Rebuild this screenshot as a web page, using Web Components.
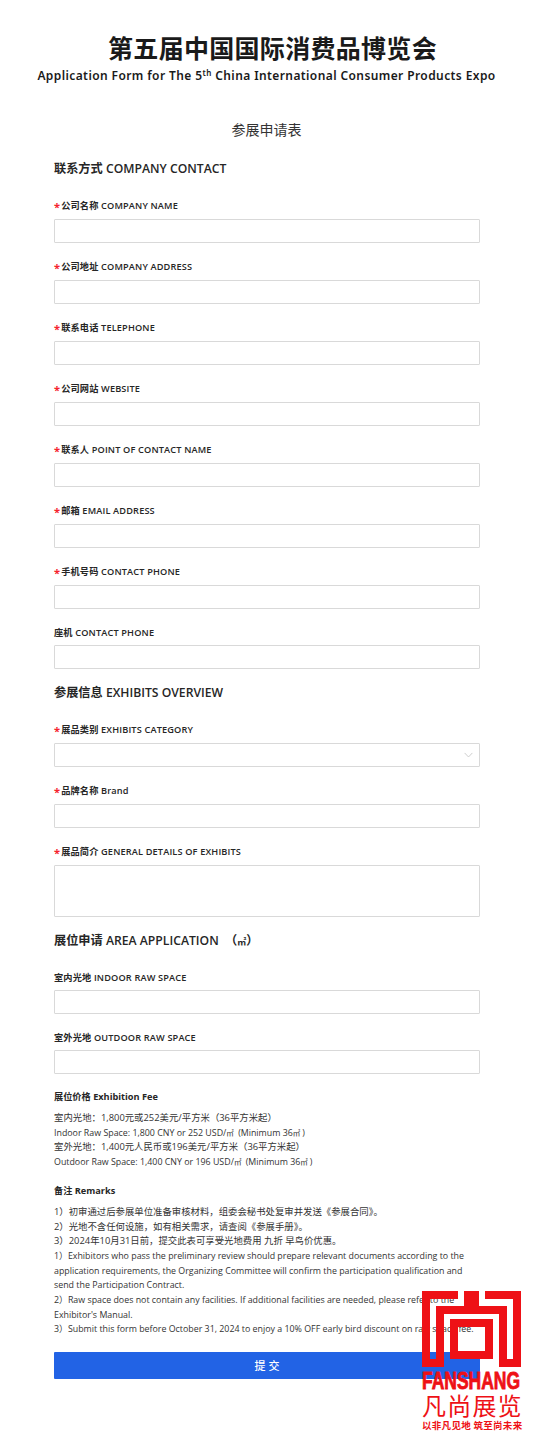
<!DOCTYPE html>
<html lang="zh">
<head>
<meta charset="utf-8">
<title>参展申请表</title>
<style>
  html, body { margin: 0; padding: 0; background: #fff; }
  body {
    font-family: "Open Sans", "Noto Sans CJK SC", sans-serif;
    color: #262626;
    position: relative;
    height: 1445px;
    overflow: hidden;
  }
</style>
</head>
<body>
<expo-form></expo-form>
<fanshang-logo></fanshang-logo>

<script>
class ExpoHeader extends HTMLElement {
    constructor() {
        super();
        this.attachShadow({ mode: 'open' }).innerHTML = `
            <style>
                :host { display: block; text-align: center; color: #1a1a1a; padding-top: 31px; }
                h1 {
                    margin: 0;
                    padding-left: 12px;
                    font: 700 25px/32px "Noto Sans CJK SC", sans-serif;
                    letter-spacing: 0.3px;
                }
                p {
                    margin: 4px 0 0;
                    font: 600 12px/18px "Noto Sans", "Noto Sans CJK SC", sans-serif;
                    letter-spacing: 0.4px;
                    white-space: nowrap;
                }
                sup { font-size: 8px; line-height: 0; vertical-align: 4px; }
                h2 {
                    margin: 34px 0 0;
                    font: 400 14px/20px "Noto Sans CJK SC", sans-serif;
                    color: #333;
                }
            </style>
            <h1>第五届中国国际消费品博览会</h1>
            <p>Application Form for The 5<sup>th</sup> China International Consumer Products Expo</p>
            <h2>参展申请表</h2>
        `;
    }
}

class FormSection extends HTMLElement {
    constructor() {
        super();
        this.attachShadow({ mode: 'open' }).innerHTML = `
            <style>
                :host { display: block; }
                h3 {
                    margin: 0 0 2px;
                    height: 22px;
                    font: 600 12.2px/22px "Open Sans", "Noto Sans CJK SC", sans-serif;
                    color: #262626;
                    white-space: pre;
                }
                h3 small { font-size: 9px; line-height: 0; }
                .fields { display: flex; flex-direction: column; gap: 16px; padding-top: 16px; }
            </style>
            <h3>${this.getAttribute('heading')}</h3>
            <div class="fields"><slot></slot></div>
        `;
    }
}

class FormField extends HTMLElement {
    constructor() {
        super();
        const type = this.getAttribute('type') || 'text';
        const required = this.hasAttribute('required');
        const mark = required ? '<span class="req">*</span>' : '';
        let control = '<div class="box"></div>';
        if (type === 'select') {
            control = `<div class="box">
                <svg viewBox="0 0 10 6" width="9" height="6" fill="none" stroke="#c8c8c8" stroke-width="1"><path d="M.7.7 5 5.2 9.3.7"/></svg>
            </div>`;
        }
        this.attachShadow({ mode: 'open' }).innerHTML = `
            <style>
                :host { display: block; }
                label {
                    display: block;
                    height: 14px;
                    font: 600 9.2px/16px "Open Sans", "Noto Sans CJK SC", sans-serif;
                    letter-spacing: .15px;
                    color: #262626;
                    margin-bottom: ${required ? 7 : 6}px;
                    white-space: nowrap;
                }
                .req { color: #f5222d; font-size: 11px; font-weight: 700; line-height: 10px; margin-right: 1px; vertical-align: -2px; }
                .box {
                    box-sizing: border-box;
                    height: ${type === 'textarea' ? 52 : 24}px;
                    border: 1px solid #d9d9d9;
                    border-radius: 1px;
                    background: #fff;
                    display: flex;
                    align-items: center;
                    justify-content: flex-end;
                    padding-right: 6px;
                }
            </style>
            <label>${mark}${this.getAttribute('label')}</label>
            ${control}
        `;
    }
}

class FeeNotes extends HTMLElement {
    constructor() {
        super();
        this.attachShadow({ mode: 'open' }).innerHTML = `
            <style>
                :host {
                    display: block;
                    font: 400 9.4px/14.7px "Open Sans", "Noto Sans CJK SC", sans-serif;
                    color: #333;
                }
                h4 { margin: 0 0 7px; font-size: 9.2px; line-height: 14px; height: 14px; font-weight: 700; color: #262626; }
                p { margin: 0; }
                p.en { font-size: 8.85px; }
                small { font-size: 7.5px; line-height: 0; letter-spacing: 2px; }
                .remarks { margin-top: 14px; }
            </style>
            <h4>展位价格 Exhibition Fee</h4>
            <p>室内光地：1,800元或252美元/平方米（36平方米起）</p>
            <p class="en">Indoor Raw Space: 1,800 CNY or 252 USD/<small>㎡</small> (Minimum 36<small>㎡</small>)</p>
            <p>室外光地：1,400元人民币或196美元/平方米（36平方米起）</p>
            <p class="en">Outdoor Raw Space: 1,400 CNY or 196 USD/<small>㎡</small> (Minimum 36<small>㎡</small>)</p>
            <div class="remarks">
                <h4>备注 Remarks</h4>
                <p>1）初审通过后参展单位准备审核材料，组委会秘书处复审并发送《参展合同》。</p>
                <p>2）光地不含任何设施，如有相关需求，请查阅《参展手册》。</p>
                <p>3）2024年10月31日前，提交此表可享受光地费用 九折 早鸟价优惠。</p>
                <p class="en">1）Exhibitors who pass the preliminary review should prepare relevant documents according to the application requirements, the Organizing Committee will confirm the participation qualification and send the Participation Contract.</p>
                <p class="en">2）Raw space does not contain any facilities. If additional facilities are needed, please refer to the Exhibitor's Manual.</p>
                <p class="en">3）Submit this form before October 31, 2024 to enjoy a 10% OFF early bird discount on raw space fee.</p>
            </div>
        `;
    }
}

class SubmitButton extends HTMLElement {
    constructor() {
        super();
        this.attachShadow({ mode: 'open' }).innerHTML = `
            <style>
                :host {
                    display: flex;
                    align-items: center;
                    justify-content: center;
                    height: 27px;
                    margin-top: 15px;
                    padding-left: 3px;
                    background: #2263e5;
                    border-radius: 1px;
                    color: #fff;
                    font: 500 11px/1 "Noto Sans CJK SC", sans-serif;
                    letter-spacing: 3px;
                }
            </style>
            <slot></slot>
        `;
    }
}

class ExpoForm extends HTMLElement {
    constructor() {
        super();
        this.attachShadow({ mode: 'open' }).innerHTML = `
            <style>
                :host { display: block; }
                main { padding: 0 53px 0 54px; margin-top: 19px; }
                .overview, .area { margin-top: 13px; }
                fee-notes { margin-top: 16px; }
            </style>
            <expo-header></expo-header>
            <main>
                <form-section heading="联系方式 COMPANY CONTACT">
                    <form-field required label="公司名称 COMPANY NAME"></form-field>
                    <form-field required label="公司地址 COMPANY ADDRESS"></form-field>
                    <form-field required label="联系电话 TELEPHONE"></form-field>
                    <form-field required label="公司网站 WEBSITE"></form-field>
                    <form-field required label="联系人 POINT OF CONTACT NAME"></form-field>
                    <form-field required label="邮箱 EMAIL ADDRESS"></form-field>
                    <form-field required label="手机号码 CONTACT PHONE"></form-field>
                    <form-field label="座机 CONTACT PHONE"></form-field>
                </form-section>
                <form-section class="overview" heading="参展信息 EXHIBITS OVERVIEW">
                    <form-field required type="select" label="展品类别 EXHIBITS CATEGORY"></form-field>
                    <form-field required label="品牌名称 Brand"></form-field>
                    <form-field required type="textarea" label="展品简介 GENERAL DETAILS OF EXHIBITS"></form-field>
                </form-section>
                <form-section class="area" heading="展位申请 AREA APPLICATION  （<small>㎡</small>）">
                    <form-field label="室内光地 INDOOR RAW SPACE"></form-field>
                    <form-field label="室外光地 OUTDOOR RAW SPACE"></form-field>
                </form-section>
                <fee-notes></fee-notes>
                <submit-button>提交</submit-button>
            </main>
        `;
    }
}

class FanshangLogo extends HTMLElement {
    constructor() {
        super();
        this.attachShadow({ mode: 'open' }).innerHTML = `
            <style>
                :host {
                    position: absolute;
                    left: 422px;
                    top: 1291px;
                    width: 101px;
                    height: 140px;
                    display: block;
                    color: #ee1116;
                }
                svg { position: absolute; left: 0; top: 0; display: block; }
                .en, .cn, .tag { position: absolute; left: 0; white-space: nowrap; transform-origin: 0 0; }
                .en {
                    top: 79px;
                    font: 700 23px/23px "Liberation Sans", sans-serif;
                    -webkit-text-stroke: .8px #ee1116;
                    transform: scaleX(.76);
                }
                .cn { top: 102px; font: 400 24px/24px "Noto Sans CJK SC", sans-serif; letter-spacing: 1.2px; }
                .tag { top: 128px; font: 700 9.5px/12px "Noto Sans CJK SC", sans-serif; letter-spacing: .3px; }
            </style>
            <svg width="100" height="77" viewBox="0 0 100 77" fill="#ee1116" fill-rule="evenodd">
                <path d="M0 0H36V8H8V68H14V15H42V0H57V15H85V68H91V8H63V0H99V76H77V23H22V76H0Z"/>
                <path d="M28 28H71V68H28ZM36 36V60H63V36Z"/>
            </svg>
            <div class="en">FANSHANG</div>
            <div class="cn">凡尚展览</div>
            <div class="tag">以非凡见地 筑至尚未来</div>
        `;
    }
}

customElements.define('expo-header', ExpoHeader);
customElements.define('form-section', FormSection);
customElements.define('form-field', FormField);
customElements.define('fee-notes', FeeNotes);
customElements.define('submit-button', SubmitButton);
customElements.define('expo-form', ExpoForm);
customElements.define('fanshang-logo', FanshangLogo);
</script>
</body>
</html>
